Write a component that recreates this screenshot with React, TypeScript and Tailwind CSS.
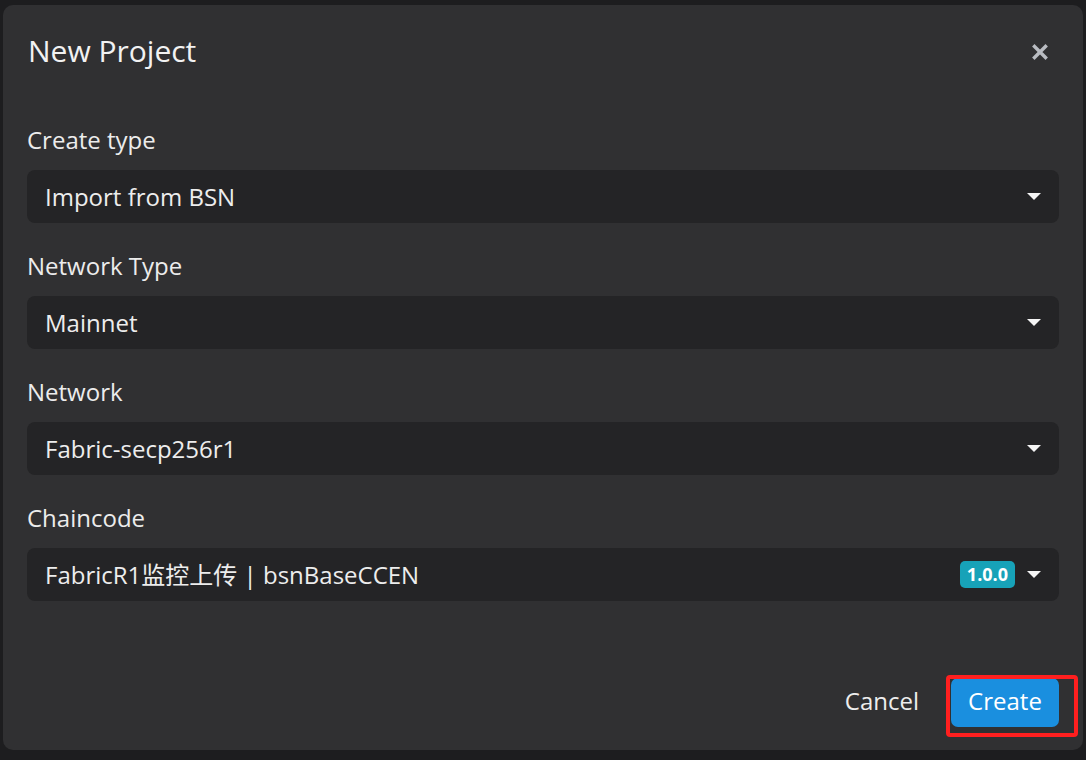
import React from "react";

const Caret = () => (
  <svg width="14" height="8" viewBox="0 0 14 8" className="shrink-0">
    <path d="M0 0 H14 L7 7 Z" fill="#f5f5f5" />
  </svg>
);

function Field({ label, value, badge }: { label: string; value: string; badge?: string }) {
  return (
    <div className="mb-[28px]">
      <div className="h-[30px] leading-[30px] text-[24px] text-[#ececec]">{label}</div>
      <div className="mt-[15px] h-[53px] rounded-[8px] bg-[#242426] flex items-center pl-[18px] pr-[18px]">
        <span className="flex-1 text-[24px] text-[#ededed] whitespace-nowrap">{value}</span>
        {badge && (
          <span className="mr-[12px] h-[27px] px-[7px] rounded-[5px] bg-[#17a2b8] text-white text-[18px] font-bold leading-[27px]">
            {badge}
          </span>
        )}
        <Caret />
      </div>
    </div>
  );
}

export default function App() {
  return (
    <div
      className="w-[1086px] h-[760px] bg-[#1d1d1f] overflow-hidden pt-[5px] pl-[3px]"
      style={{ fontFamily: '"Open Sans", "Noto Sans CJK SC", sans-serif' }}
    >
      <div className="w-[1080px] h-[745px] rounded-[10px] bg-[#303032] flex flex-col px-[24px]">
        <div className="pt-[26px] h-[72px] flex items-start justify-between">
          <h1 className="text-[30px] leading-[40px] text-[#f2f2f2] pl-px">New Project</h1>
          <svg width="16" height="16" viewBox="0 0 16 16" className="mt-[13px] mr-[11px]">
            <path d="M2.5 2.5 L13.5 13.5 M13.5 2.5 L2.5 13.5" stroke="#b9bcc2" strokeWidth="3.4" strokeLinecap="square" />
          </svg>
        </div>
        <div className="mt-[48px]">
          <Field label="Create type" value="Import from BSN" />
          <Field label="Network Type" value="Mainnet" />
          <Field label="Network" value="Fabric-secp256r1" />
          <Field label="Chaincode" value="FabricR1监控上传 | bsnBaseCCEN" badge="1.0.0" />
        </div>
        <div className="mt-auto pb-[23px] flex items-center justify-end">
          <button className="text-[24px] leading-[32px] text-[#ededed] px-[4px] mr-[28px] mb-[3px]">Cancel</button>
          <div className="relative">
            <button className="w-[108px] h-[49px] rounded-[7px] bg-[#1a8fdf] text-white text-[24px] leading-[32px] pb-[3px]">Create</button>
            <div className="absolute left-[-5px] top-[-3px] right-[-19px] bottom-[-10px] border-[4px] border-[#ff1f1f] rounded-[4px] pointer-events-none" />
          </div>
        </div>
      </div>
    </div>
  );
}
